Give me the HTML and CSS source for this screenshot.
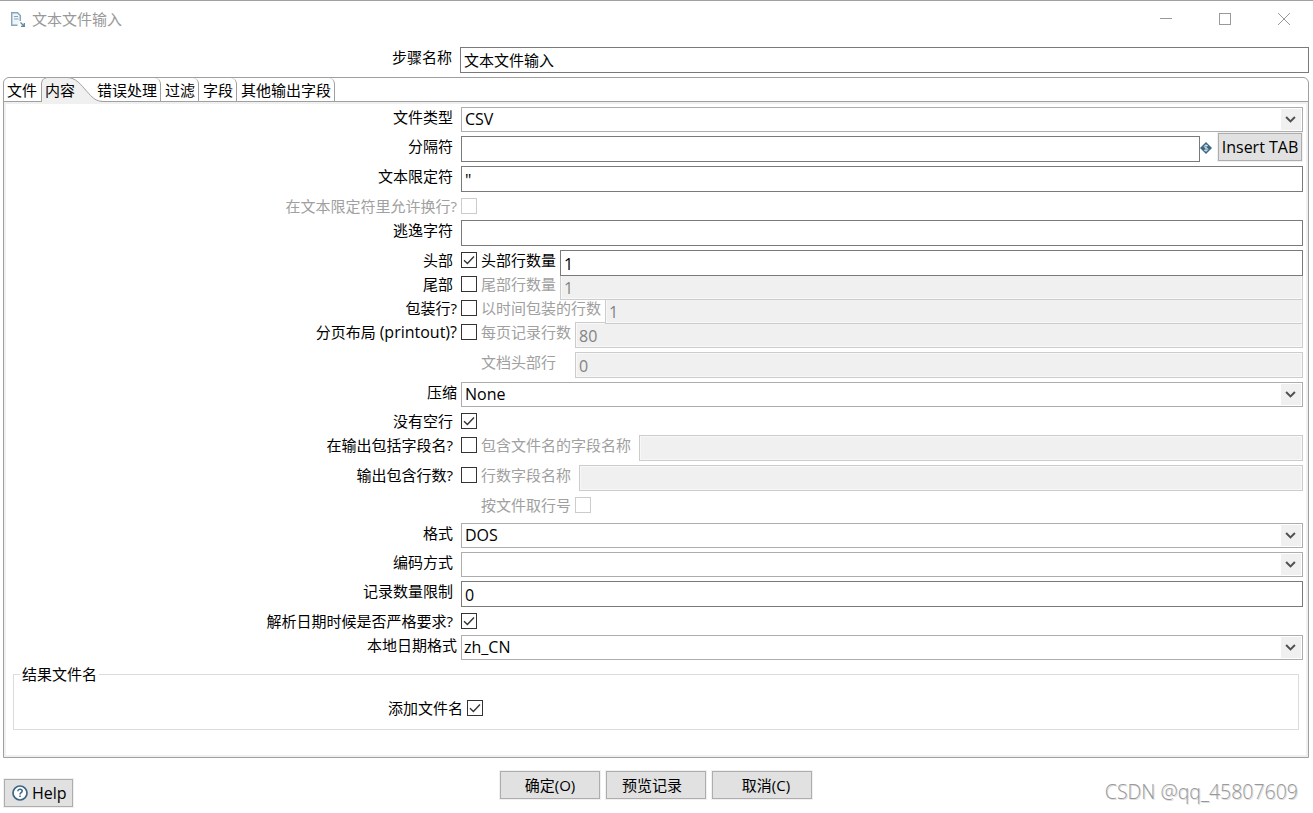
FILE: index.html
```
<!doctype html>
<html lang="zh-CN">

<head>
    <meta charset="utf-8" />
    <title>文本文件输入</title>
    <link rel="stylesheet" href="styles.css">
</head>

<body>

    <svg class="defs" width="0" height="0">
        <symbol id="check" viewBox="0 0 14 14">
            <path d="M2 7.2 L5.4 10.4 L12 3.6" fill="none" stroke="#333" stroke-width="1.4" />
        </symbol>
        <symbol id="arrow" viewBox="0 0 20 21">
            <path d="M5.1 8 L9.5 12.4 L13.9 8" fill="none" stroke="#505050" stroke-width="2" />
        </symbol>
    </svg>

    <div class="window">

        <div class="titlebar">
            <svg class="app-icon" width="16" height="17" viewBox="0 0 16 17">
                <path d="M7.5 14.3 H1.7 V1.7 H7.5 L10.3 4.5 V10" fill="#eef4f8" stroke="#86a5b9" stroke-width="1.4" />
                <path d="M4 5.5 H8 M4 8 H8.5" stroke="#86a5b9" />
                <path d="M10.5 11.5 L13.5 14.5 M14.3 12 V15.3 H11" fill="none" stroke="#5f879f" stroke-width="1.3" />
            </svg>
            <span class="title">文本文件输入</span>
            <div class="controls">
                <svg width="12" height="12"><path d="M0 5.5 H12" stroke="#999" /></svg>
                <svg width="12" height="12"><rect x="0.5" y="0.5" width="11" height="11" fill="none" stroke="#999" /></svg>
                <svg width="12" height="12"><path d="M0 0 L12 12 M12 0 L0 12" stroke="#999" /></svg>
            </div>
        </div>

        <div class="step">
            <label class="label">步骤名称</label>
            <input class="input name" value="文本文件输入">
        </div>

        <div class="folder">
            <div class="tabs">
                <div class="tab first">文件</div>
                <div class="tab active">
                    <svg width="64" height="25" viewBox="0 0 64 25">
                        <path d="M0.5 25 V6 L1.5 3 L3 1.5 L6 0.5 H26 C35 0.5 40 8 46 14.5 C51 20 54 24.5 63 24.5 V25 Z" fill="#f0f0f0" />
                        <path d="M0.5 25 V6 L1.5 3 L3 1.5 L6 0.5 H26 C35 0.5 40 8 46 14.5 C51 20 54 24.5 63 24.5" fill="none" stroke="#a0a0a0" />
                    </svg>
                    <span>内容</span>
                </div>
                <div class="tab errors">错误处理</div>
                <div class="tab">过滤</div>
                <div class="tab">字段</div>
                <div class="tab">其他输出字段</div>
            </div>

            <div class="pane">
                <div class="row combo-row">
                    <label class="label">文件类型</label>
                    <div class="combo"><span>CSV</span><svg><use href="#arrow" /></svg></div>
                </div>
                <div class="row">
                    <label class="label">分隔符</label>
                    <input class="input" value="">
                    <svg class="variable" width="12" height="12" viewBox="0 0 12 12">
                        <path d="M6 0 L12 6 L6 12 L0 6 Z" fill="#3d6684" />
                        <path d="M8 4 C7 3 4.2 3 4.2 4.6 C4.2 6.2 7.9 5.6 7.9 7.4 C7.9 9 5 9 4 8 M6 2.4 V9.6" fill="none" stroke="#d8e6ee" />
                    </svg>
                    <button class="btn insert">Insert TAB</button>
                </div>
                <div class="row">
                    <label class="label">文本限定符</label>
                    <input class="input" value="&quot;">
                </div>
                <div class="row check-row">
                    <label class="label wide disabled">在文本限定符里允许换行?</label>
                    <span class="box disabled"></span>
                </div>
                <div class="row">
                    <label class="label">逃逸字符</label>
                    <input class="input" value="">
                </div>
                <div class="row check-row layer3">
                    <label class="label">头部</label>
                    <span class="box"><svg><use href="#check" /></svg></span>
                    <label class="sub w83">头部行数量</label>
                    <input class="input" value="1">
                </div>
                <div class="row check-row layer2">
                    <label class="label">尾部</label>
                    <span class="box"></span>
                    <label class="sub w83 disabled">尾部行数量</label>
                    <input class="input" value="1" disabled>
                </div>
                <div class="row check-row layer1">
                    <label class="label wide">包装行?</label>
                    <span class="box"></span>
                    <label class="sub w128 disabled">以时间包装的行数</label>
                    <input class="input" value="1" disabled>
                </div>
                <div class="row">
                    <label class="label wide">分页布局 <span class="latin">(printout)?</span></label>
                    <span class="box"></span>
                    <label class="sub w98 disabled">每页记录行数</label>
                    <input class="input" value="80" disabled>
                </div>
                <div class="row">
                    <label class="label"></label>
                    <span class="box none"></span>
                    <label class="sub w98 disabled">文档头部行</label>
                    <input class="input" value="0" disabled>
                </div>
                <div class="row combo-row">
                    <label class="label wide">压缩</label>
                    <div class="combo"><span>None</span><svg><use href="#arrow" /></svg></div>
                </div>
                <div class="row check-row">
                    <label class="label">没有空行</label>
                    <span class="box"><svg><use href="#check" /></svg></span>
                </div>
                <div class="row">
                    <label class="label">在输出包括字段名?</label>
                    <span class="box"></span>
                    <label class="sub w162 disabled">包含文件名的字段名称</label>
                    <input class="input" value="" disabled>
                </div>
                <div class="row">
                    <label class="label">输出包含行数?</label>
                    <span class="box"></span>
                    <label class="sub w102 disabled">行数字段名称</label>
                    <input class="input" value="" disabled>
                </div>
                <div class="row by-file">
                    <label class="label"></label>
                    <span class="box none"></span>
                    <label class="sub w98 disabled">按文件取行号</label>
                    <span class="box disabled"></span>
                </div>
                <div class="row combo-row">
                    <label class="label">格式</label>
                    <div class="combo"><span>DOS</span><svg><use href="#arrow" /></svg></div>
                </div>
                <div class="row combo-row">
                    <label class="label">编码方式</label>
                    <div class="combo"><span></span><svg><use href="#arrow" /></svg></div>
                </div>
                <div class="row">
                    <label class="label">记录数量限制</label>
                    <input class="input" value="0">
                </div>
                <div class="row check-row">
                    <label class="label">解析日期时候是否严格要求?</label>
                    <span class="box"><svg><use href="#check" /></svg></span>
                </div>
                <div class="row combo-row">
                    <label class="label wide">本地日期格式</label>
                    <div class="combo locale"><span>zh_CN</span><svg><use href="#arrow" /></svg></div>
                </div>

                <fieldset class="group">
                    <legend>结果文件名</legend>
                    <div class="group-row">
                        <label class="label">添加文件名</label>
                        <span class="box"><svg><use href="#check" /></svg></span>
                    </div>
                </fieldset>
            </div>
        </div>

        <div class="footer">
            <button class="btn help">
                <svg width="16" height="16" viewBox="0 0 16 16">
                    <circle cx="8" cy="8" r="7" fill="#fff" stroke="#3d6684" stroke-width="1.7" />
                    <path d="M5.8 6.3 C5.8 3.5 10.2 3.7 10.2 6.2 C10.2 7.7 8 7.6 8 9.4 M8 10.6 V12.1" fill="none" stroke="#3d6684" stroke-width="1.5" />
                </svg>
                Help
            </button>
            <div class="actions">
                <button class="btn">确定(O)</button>
                <button class="btn preview">预览记录</button>
                <button class="btn cancel">取消(C)</button>
            </div>
            <div class="watermark">CSDN @qq_45807609</div>
        </div>

    </div>

</body>

</html>
```
FILE: styles.css
```
* {
    box-sizing: border-box;
}

html,
body {
    margin: 0;
    height: 100%;
    overflow: hidden;
    background-color: white;
}

body,
input,
button {
    font-family: "Open Sans", "Noto Sans CJK SC", sans-serif;
    font-size: 15px;
    color: black;
}

svg {
    display: block;
    flex-shrink: 0;
}

.defs {
    position: absolute;
}

.window {
    display: flex;
    flex-direction: column;
    width: 1313px;
    height: 813px;
    border-top: 1px solid #a0a0a0;
}

/* title bar */
.titlebar {
    display: flex;
    height: 46px;
    padding: 10px 23px 0 10px;
}

.titlebar .title {
    flex-grow: 1;
    margin-left: 6px;
    line-height: 16px;
    color: #999;
}

.titlebar .controls {
    display: flex;
    gap: 47px;
    padding-top: 2px;
}

.step {
    display: flex;
    align-items: flex-start;
    height: 30px;
    padding-right: 4px;
}

.step .label {
    width: 460px;
    padding-right: 8px;
}

/* common controls */
.label {
    flex-shrink: 0;
    width: 461px;
    padding-right: 8px;
    line-height: 21px;
    text-align: right;
    white-space: pre;
}

.label.wide {
    padding-right: 4px;
}

.label.disabled,
.sub.disabled {
    color: #a0a0a0;
}

.latin {
    font-size: 16px;
    line-height: 1;
}

.input {
    flex: 1;
    min-width: 0;
    height: 26px;
    padding: 1px 3px 0;
    border: 1px solid #7a7a7a;
    border-radius: 0;
    background-color: white;
    font-size: 16px;
}

.input.name {
    padding: 0 3px 2px;
    font-size: 15px;
}

.input:disabled {
    border-color: #ccc;
    background-color: #f0f0f0;
    box-shadow: inset 0 0 0 1px #f8f8f8;
    color: #838383;
}

.combo {
    display: flex;
    flex: 1;
    height: 25px;
    padding: 1px 1px 1px 3px;
    border: 1px solid #adadad;
    font-size: 16px;
    line-height: 21px;
}

.combo span {
    flex: 1;
}

.combo svg {
    width: 20px;
    height: 21px;
    background-color: #f0f0f0;
}

.combo.locale {
    padding-left: 2px;
}

.box {
    flex-shrink: 0;
    width: 16px;
    height: 16px;
    margin-top: 2px;
    border: 1px solid #333;
    background-color: white;
}

.box svg {
    width: 14px;
    height: 14px;
}

.box.disabled {
    border-color: #ccc;
}

.box.none {
    visibility: hidden;
}

.sub {
    flex-shrink: 0;
    padding-left: 4px;
    line-height: 21px;
    white-space: nowrap;
}

.w83 {
    width: 83px;
}

.w98 {
    width: 98px;
}

.w102 {
    width: 102px;
}

.w128 {
    width: 128px;
}

.w162 {
    width: 162px;
}

.btn {
    height: 28px;
    padding: 0;
    border: 1px solid #adadad;
    border-radius: 0;
    background-color: #e1e1e1;
    box-shadow: 0 0 0 1px #f0f0f0;
    line-height: 26px;
}

/* tab folder */
.folder {
    height: 681px;
    margin: 0 4px 0 3px;
    border: 1px solid #a0a0a0;
    border-radius: 6px 6px 0 0;
}

.tabs {
    display: flex;
    height: 24px;
    border-bottom: 1px solid #a0a0a0;
    line-height: 25px;
}

.tab {
    width: 38px;
    padding-left: 4px;
    border-right: 1px solid #a0a0a0;
    border-top-right-radius: 6px;
    white-space: nowrap;
}

.tab.first {
    width: 37px;
    padding-left: 3px;
    border-right: 0;
}

.tab.active {
    position: relative;
    width: 56px;
    border: 0;
}

.tab.active svg {
    position: absolute;
    top: -1px;
    left: 0;
}

.tab.active span {
    position: relative;
}

.tab.errors {
    width: 64px;
    padding-left: 0;
}

.tab:last-child {
    width: 98px;
}

.pane {
    height: 655px;
    padding-top: 3px;
    border: 2px solid #f0f0f0;
}

.row {
    display: flex;
    align-items: flex-start;
    height: 30px;
    margin-left: -6px;
    padding-right: 3px;
}

.combo-row {
    height: 29px;
}

.check-row {
    height: 24px;
}

.by-file {
    height: 28px;
}

/* the upper field covers the top edge of the one below it */
.layer1,
.layer2,
.layer3 {
    position: relative;
    z-index: 1;
}

.layer2 {
    z-index: 2;
}

.layer3 {
    z-index: 3;
}

.variable {
    margin: 6px 6px 0 0;
}

.insert {
    width: 84px;
    margin: -3px 1px 0 0;
    font-size: 16px;
}

.group {
    height: 66px;
    margin: 0 7px 0 7px;
    padding: 0;
    border: 1px solid #dcdcdc;
}

.group legend {
    margin-left: 6px;
    padding: 0 2px;
    line-height: 20px;
}

.group-row {
    display: flex;
    padding-top: 14px;
}

.group .label {
    width: 453px;
    padding-right: 4px;
}

/* bottom buttons */
.footer {
    display: flex;
    position: relative;
    align-items: flex-start;
}

.help {
    display: flex;
    align-items: center;
    gap: 4px;
    width: 69px;
    margin: 21px 0 0 4px;
    padding-left: 7px;
    font-size: 16px;
}

.actions {
    display: flex;
    gap: 6px;
    margin: 13px 0 0 427px;
}

.actions .btn {
    width: 100px;
}

.actions .preview {
    padding-right: 8px;
}

.actions .cancel {
    padding-left: 8px;
}

.watermark {
    margin: 20px 15px 0 auto;
    font-size: 19.5px;
    font-weight: 300;
    line-height: 28px;
    color: #999;
    text-shadow: 1px 1px 0 #ddd;
}
```
